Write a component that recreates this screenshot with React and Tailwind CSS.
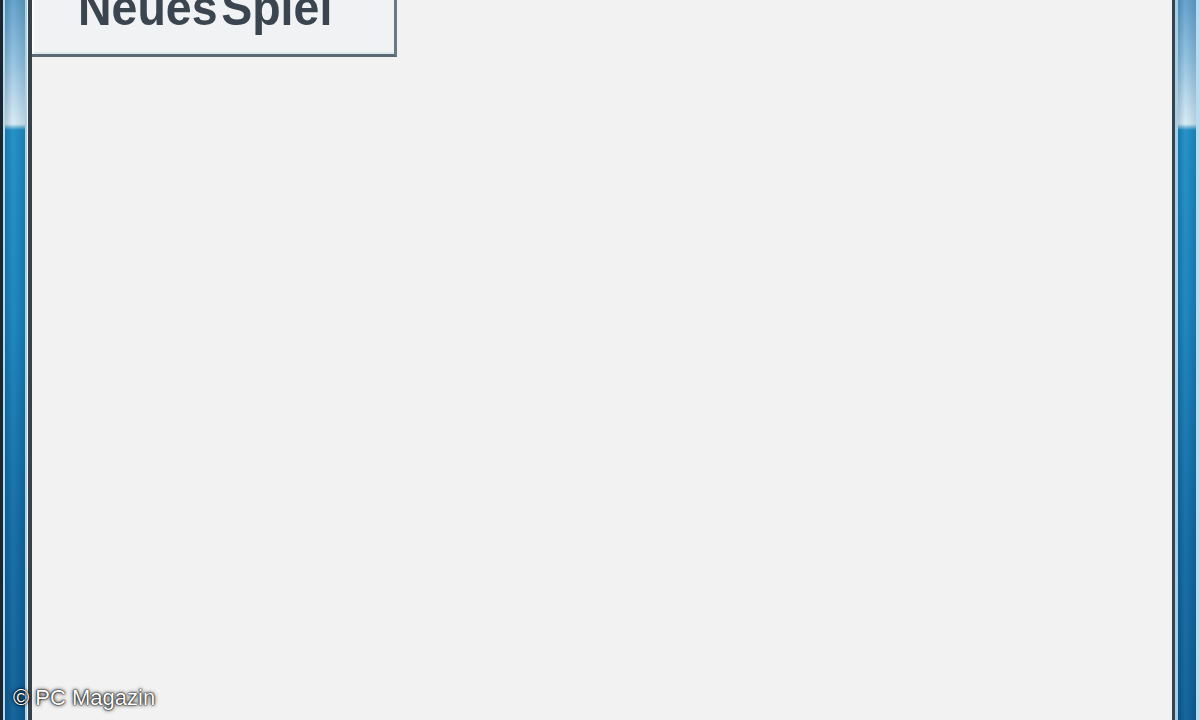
import React from "react";

function BlueStrip({ className }) {
  return (
    <div
      className={
        "h-full bg-[linear-gradient(to_bottom,#5e9fca_0px,#8fc1e0_60px,#d6ebf5_124px,#1b8cc4_130px,#1583bd_300px,#0d6aa4_520px,#0a5d96_100%)] " +
        className
      }
    >
      <div className="h-full w-full bg-[linear-gradient(to_right,rgba(0,30,60,0.18),rgba(255,255,255,0.06)_40%,rgba(0,20,50,0.12))]" />
    </div>
  );
}

export default function App() {
  return (
    <div className="relative flex h-[720px] w-[1200px] overflow-hidden bg-[#f2f2f2] font-['Liberation_Sans',Arial,sans-serif]">
      {/* left frame */}
      <div className="flex h-full w-[32px] shrink-0">
        <div className="h-full w-[3px] bg-[#1c2630]" />
        <div className="h-full w-[2px] bg-[#b9d9ec]" />
        <BlueStrip className="w-[20px]" />
        <div className="h-full w-[2px] bg-[#a9d3ea]" />
        <div className="h-full w-[1px] bg-[#eef4f7]" />
        <div className="h-full w-[4px] bg-[#37414a]" />
      </div>

      {/* content */}
      <div className="relative flex h-full flex-1 flex-col bg-[#f2f2f2]">
        <div className="flex h-[57px] w-[365px] items-start overflow-hidden border-b-[3px] border-r-[3px] border-b-[#5b6a74] border-r-[#6a7a84] bg-[#f1f2f3] shadow-[inset_2px_0_0_#ffffff,inset_0_-2px_0_#dde8ef]">
          <span className="-mt-[17px] ml-[46px] origin-left scale-x-[0.93] text-[50px] leading-[50px] font-bold [word-spacing:-10px] text-[#3a454f] whitespace-nowrap">
            Neues Spiel
          </span>
        </div>
      </div>

      {/* right frame */}
      <div className="flex h-full w-[28px] shrink-0">
        <div className="h-full w-[3px] bg-[#39434c]" />
        <div className="h-full w-[3px] bg-[#a6cfe6]" />
        <BlueStrip className="w-[18px]" />
        <div className="h-full w-[4px] bg-[#b7dcf0]" />
      </div>

      {/* watermark */}
      <div className="absolute left-[13px] top-[687px] text-[22px] leading-[22px] text-white [text-shadow:0_0_4px_#000,0_0_2px_#000,0_0_1px_#000] whitespace-nowrap">
        © PC Magazin
      </div>
    </div>
  );
}
